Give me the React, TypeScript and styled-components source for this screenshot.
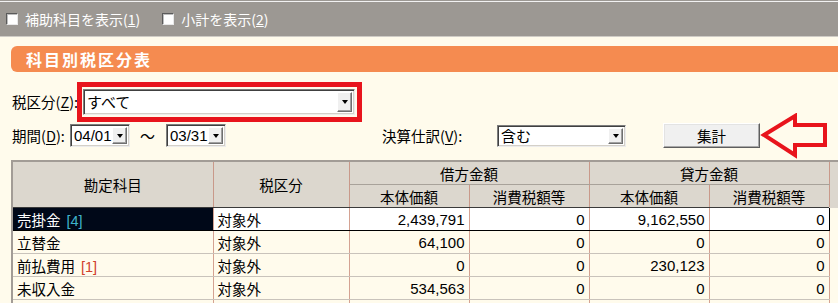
import React from "react";
import styled, { createGlobalStyle } from "styled-components";

const Global = createGlobalStyle`
  html, body { margin: 0; padding: 0; background: #fffbec; overflow: hidden; }
  body { font-family: "Noto Sans CJK JP", "Liberation Sans", sans-serif; color: #000; }
`;

const Page = styled.div`
  position: relative;
  width: 838px;
  height: 303px;
  overflow: hidden;
  background: #fffbec;
`;

const ToolbarOuter = styled.div`
  background: #9c9893;
  padding-top: 1px;
`;

const Toolbar = styled.div`
  display: flex;
  align-items: center;
  border-top: 1px solid #f2f2f2;
  border-bottom: 1px solid #cfccc6;
  background: #9c9893;
  padding-left: 6px;
  box-sizing: border-box;
  height: 36px;
`;

const CheckItem = styled.label<{ $ml?: number }>`
  display: flex;
  align-items: center;
  margin-left: ${(p) => p.$ml ?? 0}px;
  color: #fff;
  font-size: 14px;
  line-height: 1.2;
`;

const Check = styled.span`
  display: inline-block;
  width: 10px;
  height: 10px;
  background: #fff;
  border: 1px solid;
  border-color: #5a5a5a #e8e8e8 #e8e8e8 #5a5a5a;
  box-shadow: inset 1px 1px 0 #bdbdbd;
  margin-right: 7px;
`;

const TitleWrap = styled.div`
  padding: 9px 0 0 11px;
`;

const TitleBar = styled.div`
  height: 26px;
  background: #f58b50;
  border-radius: 6px 0 0 6px;
  display: flex;
  align-items: center;
  padding-left: 15px;
  color: #fff;
  font-weight: bold;
  font-size: 16px;
  letter-spacing: 2px;
`;

const FormRow = styled.div<{ $mt?: number; $h: number }>`
  display: flex;
  align-items: center;
  height: ${(p) => p.$h}px;
  margin-top: ${(p) => p.$mt ?? 0}px;
  padding-left: 12px;
`;

const Label = styled.span<{ $w?: number; $ml?: number }>`
  display: inline-block;
  width: ${(p) => (p.$w ? `${p.$w}px` : "auto")};
  margin-left: ${(p) => p.$ml ?? 0}px;
  font-size: 14.5px;
  white-space: nowrap;
  u { text-decoration: underline; text-underline-offset: 2px; }
`;

const Highlight = styled.div`
  border: 5px solid #e8141c;
  padding: 2px 2px 2px 1px;
  display: flex;
`;

const Combo = styled.div<{ $w: number; $h: number; $ml?: number }>`
  position: relative;
  display: flex;
  align-items: center;
  width: ${(p) => p.$w}px;
  height: ${(p) => p.$h}px;
  margin-left: ${(p) => p.$ml ?? 0}px;
  box-sizing: border-box;
  background: #fff;
  border: 1px solid;
  border-color: #7d7d7d #ececec #ececec #7d7d7d;
  box-shadow: inset 1px 1px 0 #404040, inset -1px -1px 0 #d4d0c8;
  padding-left: 3px;
  font-size: 15px;
`;

const ComboText = styled.span<{ $num?: boolean }>`
  flex: 1;
  font-family: ${(p) => (p.$num ? '"Liberation Sans", sans-serif' : '"Noto Sans CJK JP", sans-serif')};
  font-size: 15px;
  line-height: 1.3;
  white-space: nowrap;
`;

const DropBtn = styled.span`
  align-self: stretch;
  width: 15px;
  flex: none;
  margin: 2px 2px 2px 0;
  box-sizing: border-box;
  background: #f0f0f0;
  border: 1px solid;
  border-color: #ffffff #6f6f6f #6f6f6f #ffffff;
  box-shadow: inset -1px -1px 0 #a0a0a0;
  display: flex;
  align-items: center;
  justify-content: center;
  &::after {
    content: "";
    border-left: 3.5px solid transparent;
    border-right: 3.5px solid transparent;
    border-top: 4px solid #000;
  }
`;

const Tilde = styled.span`
  margin-left: 10px;
  width: 26px;
  font-size: 15px;
`;

const Button = styled.div`
  margin-left: 37px;
  width: 97px;
  height: 25px;
  box-sizing: border-box;
  background: #f0f0f0;
  border: 1px solid;
  border-color: #ffffff #5e5e5e #5e5e5e #ffffff;
  box-shadow: inset -1px -1px 0 #a9a9a9, inset 1px 1px 0 #e3e3e3;
  display: flex;
  align-items: center;
  justify-content: center;
  font-size: 14.5px;
`;

const Arrow = styled.svg`
  position: absolute;
  left: 760px;
  top: 113px;
`;

const TableWrap = styled.div`
  margin: 12px 0 0 11px;
  border-top: 2px solid #a29c96;
  border-left: 2px solid #a29c96;
`;

const Table = styled.table`
  border-collapse: collapse;
  table-layout: fixed;
  width: 827px;
  font-size: 14.5px;
`;

const Th = styled.th<{ $bottom?: string; $nor?: boolean }>`
  background: #dcd7ce;
  font-weight: normal;
  height: 22px;
  padding: 0;
  text-align: center;
  border-right: ${(p) => (p.$nor ? "none" : "1px solid #c9998a")};
  border-bottom: 1px solid ${(p) => p.$bottom ?? "#a8a29a"};
  white-space: nowrap;
`;

const Td = styled.td<{ $num?: boolean; $sel?: boolean; $dark?: boolean; $empty?: boolean; $lastSel?: boolean }>`
  height: 22px;
  padding: ${(p) => (p.$num ? "0 4px 0 0" : "0 4px")};
  text-align: ${(p) => (p.$num ? "right" : "left")};
  font-family: ${(p) => (p.$num ? '"Liberation Sans", sans-serif' : '"Noto Sans CJK JP", sans-serif')};
  font-size: ${(p) => (p.$num ? 15 : 14.5)}px;
  white-space: nowrap;
  overflow: hidden;
  background: ${(p) => (p.$dark ? "#000818" : p.$sel ? "#ffffff" : "transparent")};
  color: ${(p) => (p.$dark ? "#fff" : "#000")};
  border-right: ${(p) => (p.$empty ? "none" : p.$lastSel ? "1px solid #000" : "1px solid #d4a292")};
  border-bottom: ${(p) => (p.$empty ? "none" : p.$sel ? "1px solid #000" : "1px solid #c9c3bb")};
  border-top: ${(p) => (p.$sel && !p.$empty ? "1px solid #000" : "none")};
`;

const Tag = styled.span<{ $c: string }>`
  color: ${(p) => p.$c};
  margin-left: 6px;
  font-family: "Liberation Sans", sans-serif;
`;

type Row = { name: string; tag?: { t: string; c: string }; v: string[] };

const rows: Row[] = [
  { name: "売掛金", tag: { t: "[4]", c: "#3fb3c8" }, v: ["2,439,791", "0", "9,162,550", "0"] },
  { name: "立替金", v: ["64,100", "0", "0", "0"] },
  { name: "前払費用", tag: { t: "[1]", c: "#d0402c" }, v: ["0", "0", "230,123", "0"] },
  { name: "未収入金", v: ["534,563", "0", "0", "0"] },
  { name: "", v: ["", "", "", ""] },
];

export default function App() {
  return (
    <Page>
      <Global />
      <ToolbarOuter>
        <Toolbar>
          <CheckItem>
            <Check />
            補助科目を表示(<u>1</u>)
          </CheckItem>
          <CheckItem $ml={22}>
            <Check />
            小計を表示(<u>2</u>)
          </CheckItem>
        </Toolbar>
      </ToolbarOuter>
      <TitleWrap>
        <TitleBar>科目別税区分表</TitleBar>
      </TitleWrap>
      <FormRow $mt={8} $h={43}>
        <Label $w={65}>
          税区分(<u>Z</u>):
        </Label>
        <Highlight>
          <Combo $w={272} $h={26}>
            <ComboText>すべて</ComboText>
            <DropBtn />
          </Combo>
        </Highlight>
      </FormRow>
      <FormRow $h={25}>
        <Label $w={58}>
          期間(<u>D</u>):
        </Label>
        <Combo $w={60} $h={23}>
          <ComboText $num>04/01</ComboText>
          <DropBtn />
        </Combo>
        <Tilde>～</Tilde>
        <Combo $w={60} $h={23}>
          <ComboText $num>03/31</ComboText>
          <DropBtn />
        </Combo>
        <Label $w={115} $ml={156}>
          決算仕訳(<u>V</u>):
        </Label>
        <Combo $w={129} $h={22}>
          <ComboText>含む</ComboText>
          <DropBtn />
        </Combo>
        <Button>集計</Button>
      </FormRow>
      <Arrow width="68" height="46" viewBox="0 0 68 46">
        <polygon
          points="4,22 35,3 35,12 65,12 65,32 35,32 35,42"
          fill="none"
          stroke="#e8141c"
          strokeWidth="4"
          strokeLinejoin="miter"
        />
      </Arrow>
      <TableWrap>
        <Table>
          <colgroup>
            <col style={{ width: 200 }} />
            <col style={{ width: 136 }} />
            <col style={{ width: 120 }} />
            <col style={{ width: 120 }} />
            <col style={{ width: 120 }} />
            <col style={{ width: 120 }} />
            <col style={{ width: 11 }} />
          </colgroup>
          <thead>
            <tr>
              <Th rowSpan={2} $bottom="#3a3a3a">勘定科目</Th>
              <Th rowSpan={2} $bottom="#3a3a3a">税区分</Th>
              <Th colSpan={2}>借方金額</Th>
              <Th colSpan={2}>貸方金額</Th>
              <Th rowSpan={2} $nor $bottom="#dcd7ce" />
            </tr>
            <tr>
              <Th $bottom="#3a3a3a">本体価額</Th>
              <Th $bottom="#3a3a3a">消費税額等</Th>
              <Th $bottom="#3a3a3a">本体価額</Th>
              <Th $bottom="#3a3a3a">消費税額等</Th>
            </tr>
          </thead>
          <tbody>
            {rows.map((r, i) => {
              const sel = i === 0;
              return (
                <tr key={i}>
                  <Td $sel={sel} $dark={sel}>
                    {r.name}
                    {r.tag && <Tag $c={r.tag.c}>{r.tag.t}</Tag>}
                  </Td>
                  <Td $sel={sel}>{r.name ? "対象外" : ""}</Td>
                  {r.v.map((v, j) => (
                    <Td key={j} $num $sel={sel} $lastSel={sel && j === 3}>
                      {v}
                    </Td>
                  ))}
                  <Td $empty />
                </tr>
              );
            })}
          </tbody>
        </Table>
      </TableWrap>
    </Page>
  );
}
